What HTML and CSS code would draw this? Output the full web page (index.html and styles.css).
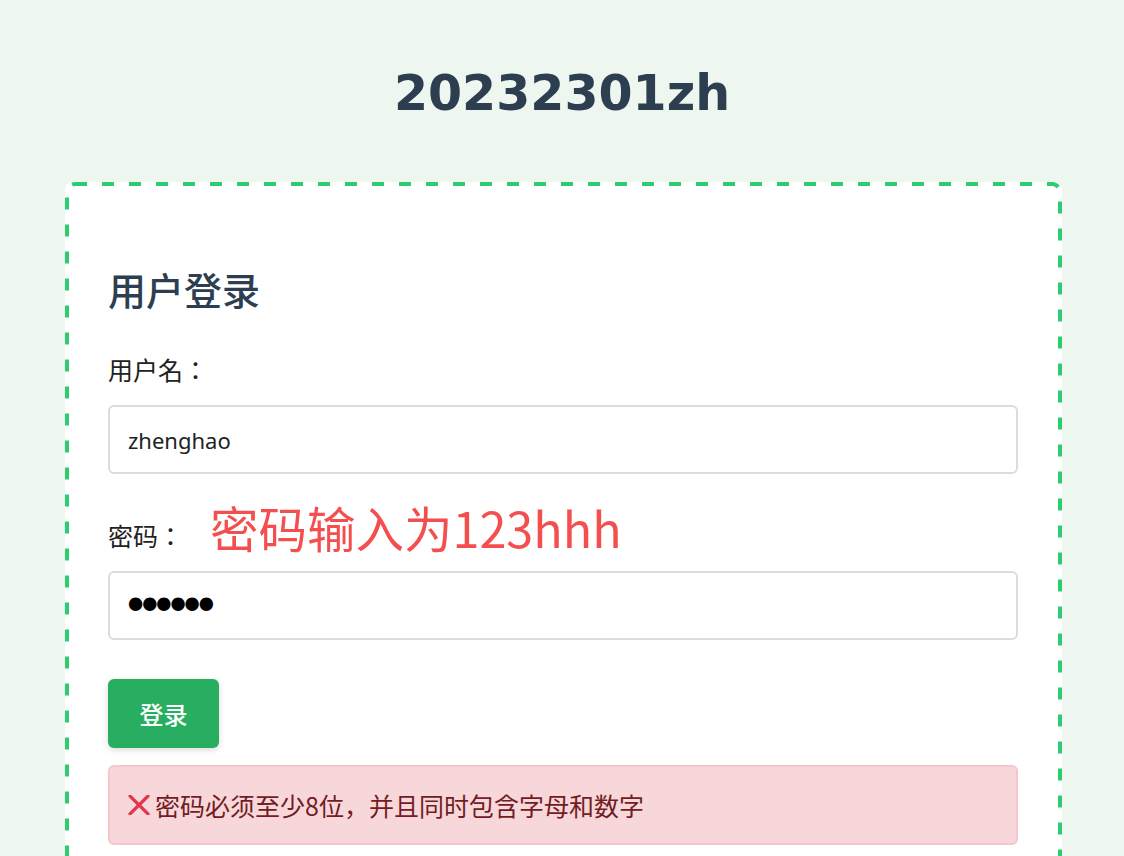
FILE: index.html
```html
<!DOCTYPE html>
<html lang="zh-CN">
<head>
<meta charset="utf-8">
<title>20232301zh</title>
<link rel="stylesheet" href="styles.css">
</head>
<body>
<h1 class="site-title">20232301zh</h1>
<div class="card">
  <svg class="card-outline" aria-hidden="true"><rect class="card-outline-rect"/></svg>
  <h2 class="card-title">用户登录</h2>
  <div class="form-group">
    <label class="field-label" for="username">用户名：</label>
    <input class="field-input" id="username" type="text" value="zhenghao">
  </div>
  <div class="form-group">
    <label class="field-label" for="password">密码：<span class="annotation">密码输入为123hhh</span></label>
    <input class="field-input field-password" id="password" type="password" value="123hhh">
  </div>
  <button class="btn-login" type="button">登录</button>
  <div class="error-box">
    <svg class="error-icon" width="22" height="20" viewBox="0 0 22 20"><path d="M2 1 L20 19 M20 1 L2 19" stroke="#e2374b" stroke-width="3.2" stroke-linecap="round" fill="none"/></svg>
    <span class="error-text">密码必须至少8位，并且同时包含字母和数字</span>
  </div>
</div>
</body>
</html>
```

FILE: styles.css
```css
html, body {
  margin: 0;
  padding: 0;
}
body {
  background: #eef6f0;
  font-family: "Noto Sans CJK JP", "Noto Sans CJK SC", "Noto Sans", sans-serif;
  color: #222;
  font-feature-settings: "locl" 0;
}
.site-title {
  font-family: "DejaVu Sans", sans-serif;
  font-weight: bold;
  font-size: 49px;
  line-height: 56px;
  color: #2c3e50;
  text-align: center;
  margin: 66px 0 60px;
}
.card {
  position: relative;
  box-sizing: border-box;
  margin: 0 62px 0 65px;
  background: #fff;
  border: 4px solid transparent;
  border-radius: 8px;
  padding: 80px 40px 40px 39px;
}
.card-outline {
  position: absolute;
  left: -4px;
  top: -4px;
  width: calc(100% + 8px);
  height: calc(100% + 8px);
  pointer-events: none;
  overflow: visible;
}
.card-outline-rect {
  x: 2px;
  y: 2px;
  width: calc(100% - 4px);
  height: calc(100% - 4px);
  rx: 8px;
  ry: 8px;
  fill: none;
  stroke: #2ecc71;
  stroke-width: 4px;
  stroke-dasharray: 12 15;
}
.card-title {
  font-size: 38px;
  line-height: 46px;
  font-weight: 500;
  color: #2c3e50;
  margin: 0 0 39px;
}
.form-group {
  display: flex;
  flex-direction: column;
}
.form-group + .form-group {
  margin-top: 43px;
}
.field-label {
  position: relative;
  font-size: 25px;
  line-height: 36px;
  color: #222;
  margin-bottom: 18px;
}
.annotation {
  position: absolute;
  left: 102px;
  top: -18px;
  font-family: "Noto Sans CJK SC", sans-serif;
  font-size: 48.5px;
  line-height: 56px;
  color: #f44f4f;
  white-space: nowrap;
}
.field-input {
  box-sizing: border-box;
  height: 69px;
  width: 100%;
  border: 2px solid #dcdcdc;
  border-radius: 6px;
  padding: 0 18px;
  font-family: "Noto Sans", sans-serif;
  font-size: 22px;
  color: #222;
  background: #fff;
  outline: none;
}
.field-password {
  font-family: "DejaVu Sans", sans-serif;
  font-size: 46px;
  letter-spacing: -13px;
  padding-left: 12px;
  color: #000;
}
.btn-login {
  display: block;
  height: 69px;
  width: 111px;
  border: none;
  border-radius: 6px;
  background: #27ae60;
  color: #fff;
  font-family: "Noto Sans CJK SC", sans-serif;
  font-size: 24px;
  font-weight: 500;
  box-shadow: 0 2px 6px rgba(0, 0, 0, 0.15);
  margin: 39px 0 17px;
  padding: 0;
}
.error-box {
  display: flex;
  align-items: center;
  gap: 5px;
  box-sizing: border-box;
  height: 80px;
  padding: 0 18px;
  background: #f8d7da;
  border: 2px solid #f5c6cb;
  border-radius: 6px;
  color: #721c24;
  font-size: 25px;
}
.error-icon {
  flex: none;
}
```
